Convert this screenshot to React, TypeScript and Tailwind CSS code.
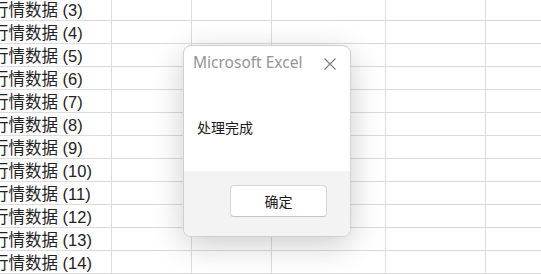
import React from 'react';

const rows = [3, 4, 5, 6, 7, 8, 9, 10, 11, 12, 13, 14];

export default function App() {
  return (
    <div className="relative w-[541px] h-[274px] overflow-hidden bg-white font-['Liberation_Sans','Noto_Sans_CJK_SC',sans-serif]">
      {/* sheet grid */}
      <div className="mt-[-2px] flex flex-col">
        {rows.map((n) => (
          <div key={n} className="flex h-[23px] border-b border-[#dcdcdc]">
            <div className="w-[112px] shrink-0 border-r border-[#dcdcdc] overflow-hidden flex items-center pt-[2px]">
              <span className="ml-[-8px] whitespace-nowrap text-[16.5px] text-[#222]">行情数据 ({n})</span>
            </div>
            <div className="w-[80px] shrink-0 border-r border-[#dcdcdc]" />
            <div className="w-[80px] shrink-0 border-r border-[#dcdcdc]" />
            <div className="w-[114px] shrink-0 border-r border-[#dcdcdc]" />
            <div className="w-[100px] shrink-0 border-r border-[#dcdcdc]" />
            <div className="flex-1" />
          </div>
        ))}
      </div>

      {/* message box */}
      <div className="absolute left-[183px] top-[45px] w-[168px] h-[192px] flex flex-col rounded-[8px] border border-[#cfcfcf] bg-white overflow-hidden shadow-[0_8px_32px_rgba(0,0,0,0.2)]">
        <div className="h-[34px] shrink-0 flex items-center justify-between pl-[9px] pr-[14px]">
          <span className="text-[15.5px] text-[#959595] font-['Noto_Sans',sans-serif]">Microsoft Excel</span>
          <svg width="12" height="12" viewBox="0 0 12 12" className="text-[#7a7a7a] mt-[2px]">
            <path d="M0.5 0.5 L11.5 11.5 M11.5 0.5 L0.5 11.5" stroke="currentColor" strokeWidth="1.1" fill="none" />
          </svg>
        </div>
        <div className="flex-1 flex items-center pl-[13px] pt-[4px]">
          <span className="text-[14px] text-[#1a1a1a] font-['Noto_Sans_CJK_SC',sans-serif]">处理完成</span>
        </div>
        <div className="h-[65px] shrink-0 bg-[#f3f3f3] flex justify-end pt-[14px] pr-[23px]">
          <button className="w-[97px] h-[32px] rounded-[4px] bg-white border border-[#d6d6d6] border-b-[#c4c4c4] text-[14px] text-[#1a1a1a] font-['Noto_Sans_CJK_SC',sans-serif]">
            确定
          </button>
        </div>
      </div>
    </div>
  );
}
